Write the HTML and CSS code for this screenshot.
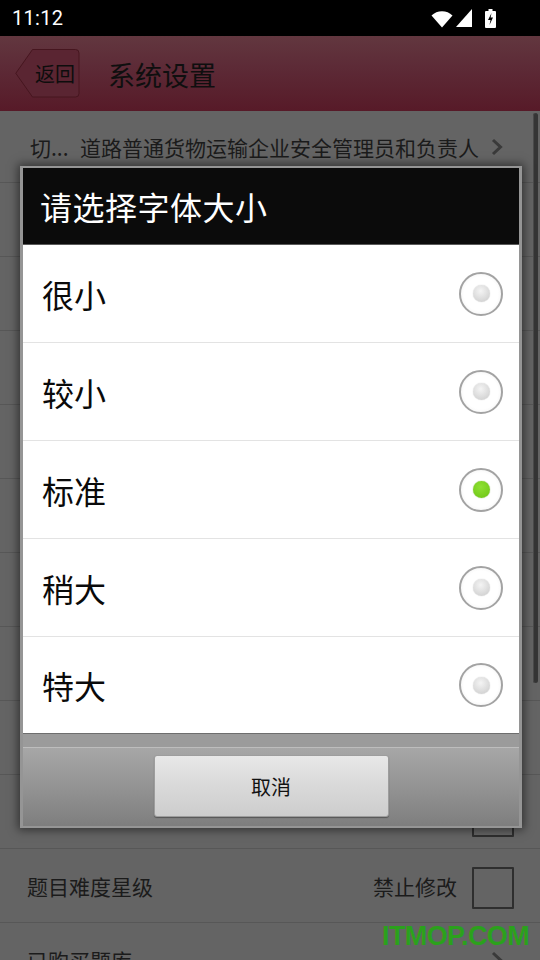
FILE: index.html
```html
<!DOCTYPE html>
<html lang="zh">
<head>
<meta charset="utf-8">
<title>系统设置</title>
<link rel="stylesheet" href="styles.css">
</head>
<body>
<div class="screen">
  <div class="status">
    <span class="time">11:12</span>
    <div class="status-icons">
      <svg class="ic-wifi" width="22" height="19" viewBox="0 0 22 19"><path d="M11 18.5 L0.5 6.5 A15 15 0 0 1 21.5 6.5 Z" fill="#fff"/></svg>
      <svg class="ic-signal" width="16" height="18" viewBox="0 0 16 18"><path d="M0 18 L16 18 L16 0 Z" fill="#fff"/></svg>
      <svg class="ic-battery" width="11" height="19" viewBox="0 0 11 19"><path d="M3.5 0 H7.5 V2 H10 a1 1 0 0 1 1 1 V18 a1 1 0 0 1 -1 1 H1 a1 1 0 0 1 -1 -1 V3 a1 1 0 0 1 1 -1 H3.5 Z" fill="#fff"/><path d="M6.5 4 L3 11 H5.5 L4.5 16 L8 8.5 H5.6 Z" fill="#000"/></svg>
    </div>
  </div>

  <div class="header">
    <div class="back">
      <svg class="back-shape" width="65" height="49" viewBox="0 0 65 49"><path d="M17.5 0.5 H60.5 a3.5 3.5 0 0 1 3.5 3.5 V44.5 a3.5 3.5 0 0 1 -3.5 3.5 H17.5 L0.8 24.3 Z" fill="#5a2532" stroke="#46161f" stroke-width="1"/></svg>
      <span class="back-label">返回</span>
    </div>
    <div class="title">系统设置</div>
  </div>

  <div class="rows">
    <div class="row row-first"><span class="abbr">切...</span><span class="long">道路普通货物运输企业安全管理员和负责人</span><svg class="chev" width="12" height="18" viewBox="0 0 12 18"><polyline points="2,2 9.5,9 2,16" fill="none" stroke="#3a3a3a" stroke-width="3"/></svg></div>
    <div class="row"><span class="abbr">科...</span><span class="long">道路普通货物运输企业安全管理员和负责人</span><svg class="chev" width="12" height="18" viewBox="0 0 12 18"><polyline points="2,2 9.5,9 2,16" fill="none" stroke="#3a3a3a" stroke-width="3"/></svg></div>
    <div class="row"><span class="label">字体大小</span></div>
    <div class="row"><span class="label">夜间模式</span></div>
    <div class="row"><span class="label">答题音效</span></div>
    <div class="row"><span class="label">答对自动下一题</span></div>
    <div class="row"><span class="label">错题自动移除</span></div>
    <div class="row"><span class="label">题目显示</span></div>
    <div class="row"><span class="label">清除缓存</span></div>
    <div class="row"><span class="label">屏幕常亮</span><span class="box box-low"></span></div>
    <div class="row"><span class="label">题目难度星级</span><span class="side">禁止修改</span><span class="box"></span></div>
    <div class="row"><span class="label">已购买题库</span><svg class="chev" width="12" height="18" viewBox="0 0 12 18"><polyline points="2,2 9.5,9 2,16" fill="none" stroke="#3a3a3a" stroke-width="3"/></svg></div>
  </div>

  <div class="scrollbar"></div>
  <div class="watermark">ITMOP.COM</div>

  <div class="dialog">
    <div class="dlg-title">请选择字体大小</div>
    <div class="dlg-list">
      <div class="opt"><span>很小</span><span class="radio"></span></div>
      <div class="opt"><span>较小</span><span class="radio"></span></div>
      <div class="opt"><span>标准</span><span class="radio on"></span></div>
      <div class="opt"><span>稍大</span><span class="radio"></span></div>
      <div class="opt"><span>特大</span><span class="radio"></span></div>
    </div>
    <div class="dlg-strip"></div>
    <div class="dlg-bar"><div class="btn">取消</div></div>
  </div>
</div>
</body>
</html>
```
FILE: styles.css
```css
html, body {
  margin: 0;
  padding: 0;
}
body {
  width: 540px;
  height: 960px;
  overflow: hidden;
  background: #646464;
  font-family: "Noto Sans CJK SC", "Noto Sans", sans-serif;
}
.screen {
  position: relative;
  width: 540px;
  height: 960px;
  overflow: hidden;
  background: #646464;
}

/* status bar */
.status {
  height: 36px;
  background: #000;
  display: flex;
  align-items: center;
  padding: 0 44px 0 12px;
}
.time {
  color: #fff;
  font-family: Roboto, "Liberation Sans", sans-serif;
  font-size: 20px;
  letter-spacing: 0.3px;
}
.status-icons {
  margin-left: auto;
  display: flex;
  align-items: center;
}
.ic-wifi { margin-top: 1px; }
.ic-signal { margin-left: 3px; }
.ic-battery { margin-left: 13px; }

/* header */
.header {
  height: 75px;
  background: linear-gradient(#62373f, #5d2b37 40%, #571a28);
  display: flex;
  align-items: center;
  padding-left: 15px;
}
.back {
  position: relative;
  width: 65px;
  height: 49px;
  display: flex;
  align-items: center;
  justify-content: flex-end;
  padding-right: 5px;
  box-sizing: border-box;
}
.back-shape {
  position: absolute;
  left: 0;
  top: 0;
}
.back-label {
  position: relative;
  font-size: 20px;
  color: #0d0d0d;
}
.title {
  margin-left: 28px;
  font-size: 27px;
  color: #0f0f0f;
  margin-top: 1px;
}

/* background rows */
.row {
  height: 73px;
  border-bottom: 1px solid #575757;
  display: flex;
  align-items: center;
  padding: 0 26px 0 30px;
  font-size: 21px;
  color: #1b1b1b;
}
.row-first { height: 71px; }
.abbr {
  width: 50px;
  flex: none;
}
.long { white-space: nowrap; }
.chev {
  margin-left: auto;
  margin-right: 11px;
  flex: none;
}
.label { margin-left: -3px; }
.side {
  margin-left: auto;
  margin-right: 15px;
}
.box {
  width: 38px;
  height: 38px;
  border: 2px solid #2e2e2e;
  border-radius: 1px;
  margin-top: 4px;
  flex: none;
}
.box-low {
  margin-left: auto;
  margin-top: 9px;
}

.scrollbar {
  position: absolute;
  left: 533px;
  top: 113px;
  width: 5px;
  height: 570px;
  border-radius: 3px;
  background: #353535;
  box-shadow: inset 1px 0 0 #4a4a4a;
}
.watermark {
  position: absolute;
  left: 382px;
  top: 921px;
  font-family: "Liberation Sans", Arial, sans-serif;
  font-weight: bold;
  font-size: 27px;
  letter-spacing: -0.6px;
  color: #2ba11c;
}

/* dialog */
.dialog {
  position: absolute;
  left: 20px;
  top: 166px;
  width: 502px;
  box-sizing: border-box;
  border: 2px solid #959595;
  border-left-width: 3px;
  border-right-width: 3px;
  background: #0b0b0b;
  box-shadow: 0 0 9px 2px rgba(0, 0, 0, 0.5);
}
.dlg-title {
  height: 77px;
  display: flex;
  align-items: center;
  padding-left: 17px;
  color: #fff;
  font-size: 32px;
  letter-spacing: 0.5px;
  background: #0b0b0b;
  border-bottom: 1px solid #5a5a5a;
  box-sizing: border-box;
}
.dlg-list {
  background: #fff;
}
.opt {
  height: 97px;
  border-bottom: 1px solid #e3e3e3;
  display: flex;
  align-items: center;
  padding: 0 16px 0 19px;
  font-size: 32px;
  color: #0a0a0a;
}
.opt:last-child {
  border-bottom: none;
  height: 96px;
}
.radio {
  margin-left: auto;
  width: 44px;
  height: 44px;
  box-sizing: border-box;
  border-radius: 50%;
  border: 2px solid #a3a3a3;
  background: radial-gradient(circle, #fff 60%, #f1f1f1 85%, #e6e6e6 100%);
  display: flex;
  align-items: center;
  justify-content: center;
}
.radio::after {
  content: "";
  width: 17px;
  height: 17px;
  border-radius: 50%;
  background: radial-gradient(circle at 45% 35%, #f4f4f4, #d6d6d6 70%, #c8c8c8);
  box-shadow: 0 0 1px #bcbcbc;
}
.radio.on::after {
  background: radial-gradient(circle at 45% 35%, #8ee033, #76cc1c 70%, #66b515);
  box-shadow: 0 0 1px #5a9a14;
}
.dlg-strip {
  height: 13px;
  background: #9b9b9b;
  border-top: 1px solid #6e6e6e;
}
.dlg-bar {
  height: 79px;
  background: linear-gradient(#a7a7a7, #8f8f8f 60%, #7e7e7e);
  border-top: 1px solid #bdbdbd;
  box-sizing: border-box;
  padding-top: 7px;
  display: flex;
  justify-content: center;
  align-items: flex-start;
}
.btn {
  width: 235px;
  height: 62px;
  box-sizing: border-box;
  border: 1px solid #9d9d9d;
  border-radius: 3px;
  background: linear-gradient(#e8e8e8, #d9d9d9 50%, #cdcdcd);
  box-shadow: 0 1px 1px rgba(0, 0, 0, 0.35);
  display: flex;
  align-items: center;
  justify-content: center;
  font-size: 20px;
  color: #111;
}
```
